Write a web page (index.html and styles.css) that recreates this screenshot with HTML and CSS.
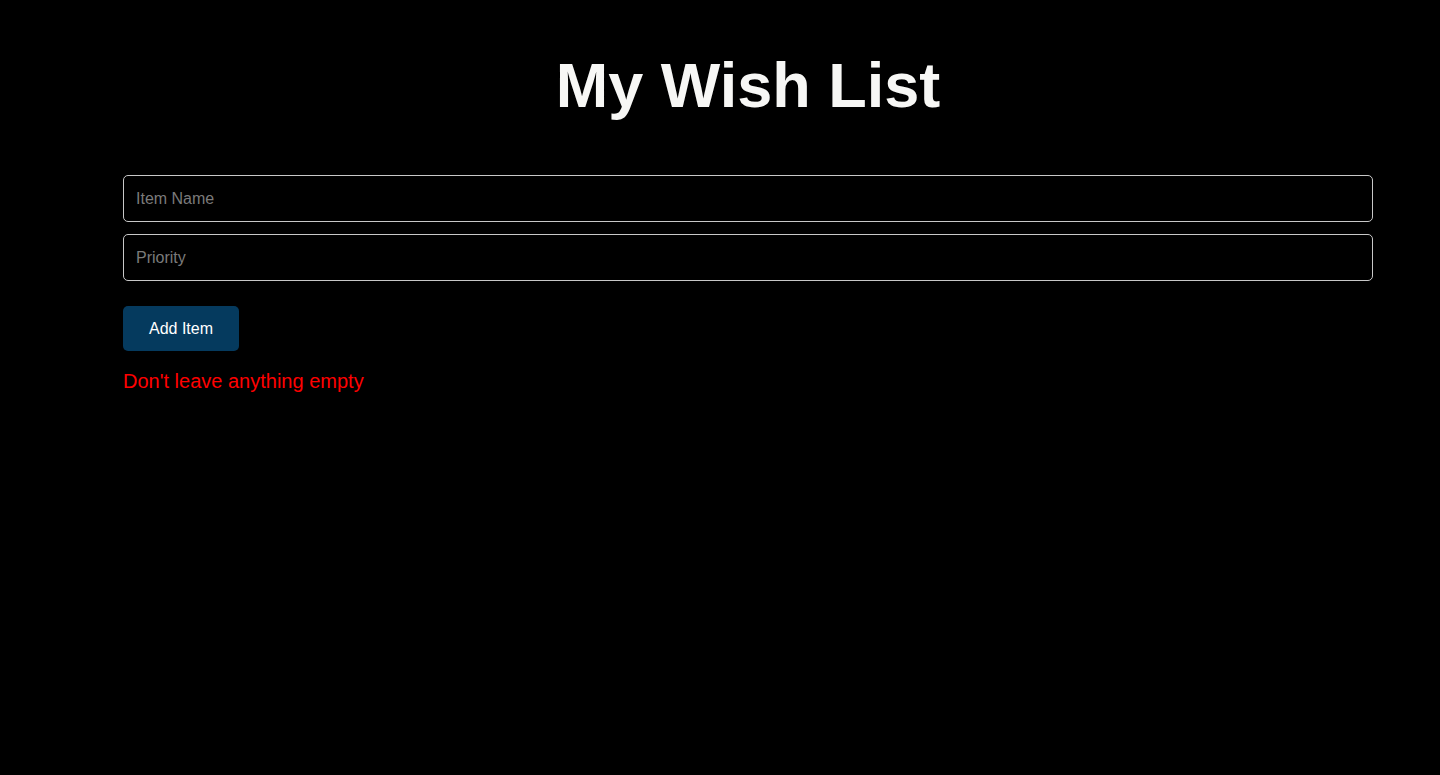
FILE: index.html
```html
<!DOCTYPE html>
<html lang="en">
<head>
<meta charset="utf-8">
<title>My Wish List</title>
<link rel="stylesheet" href="styles.css">
</head>
<body>
<main class="page">
  <h1 class="title">My Wish List</h1>
  <form class="wish-form">
    <input class="field" type="text" placeholder="Item Name">
    <input class="field" type="text" placeholder="Priority">
    <button class="add-btn" type="button">Add Item</button>
  </form>
  <p class="error">Don't leave anything empty</p>
</main>
</body>
</html>
```

FILE: styles.css
```css
html, body {
  margin: 0;
  padding: 0;
  background: #000;
  height: 100%;
}
body {
  font-family: "Liberation Sans", Arial, sans-serif;
  color: #f5f5f5;
}
.page {
  padding: 50px 67px 0 123px;
}
.title {
  margin: 0;
  font-size: 63px;
  font-weight: 700;
  text-align: center;
  color: #f7f7f5;
  line-height: 71px;
}
.wish-form {
  display: flex;
  flex-direction: column;
  align-items: flex-start;
  margin-top: 54px;
}
.field {
  box-sizing: border-box;
  width: 100%;
  height: 47px;
  margin: 0 0 12px 0;
  padding: 0 12px;
  background: #000;
  border: 1px solid #c8c8c8;
  border-radius: 5px;
  font-family: "Liberation Sans", Arial, sans-serif;
  font-size: 16px;
  color: #f5f5f5;
  outline: none;
}
.field::placeholder {
  color: #7a7a7a;
}
.add-btn {
  box-sizing: border-box;
  margin-top: 13px;
  width: 116px;
  height: 45px;
  border: none;
  border-radius: 5px;
  background: #053a5e;
  color: #fff;
  font-family: "Liberation Sans", Arial, sans-serif;
  font-size: 16px;
  cursor: pointer;
}
.error {
  margin: 19px 0 0 0;
  color: #ff0000;
  font-size: 20px;
  line-height: 23px;
}
```
